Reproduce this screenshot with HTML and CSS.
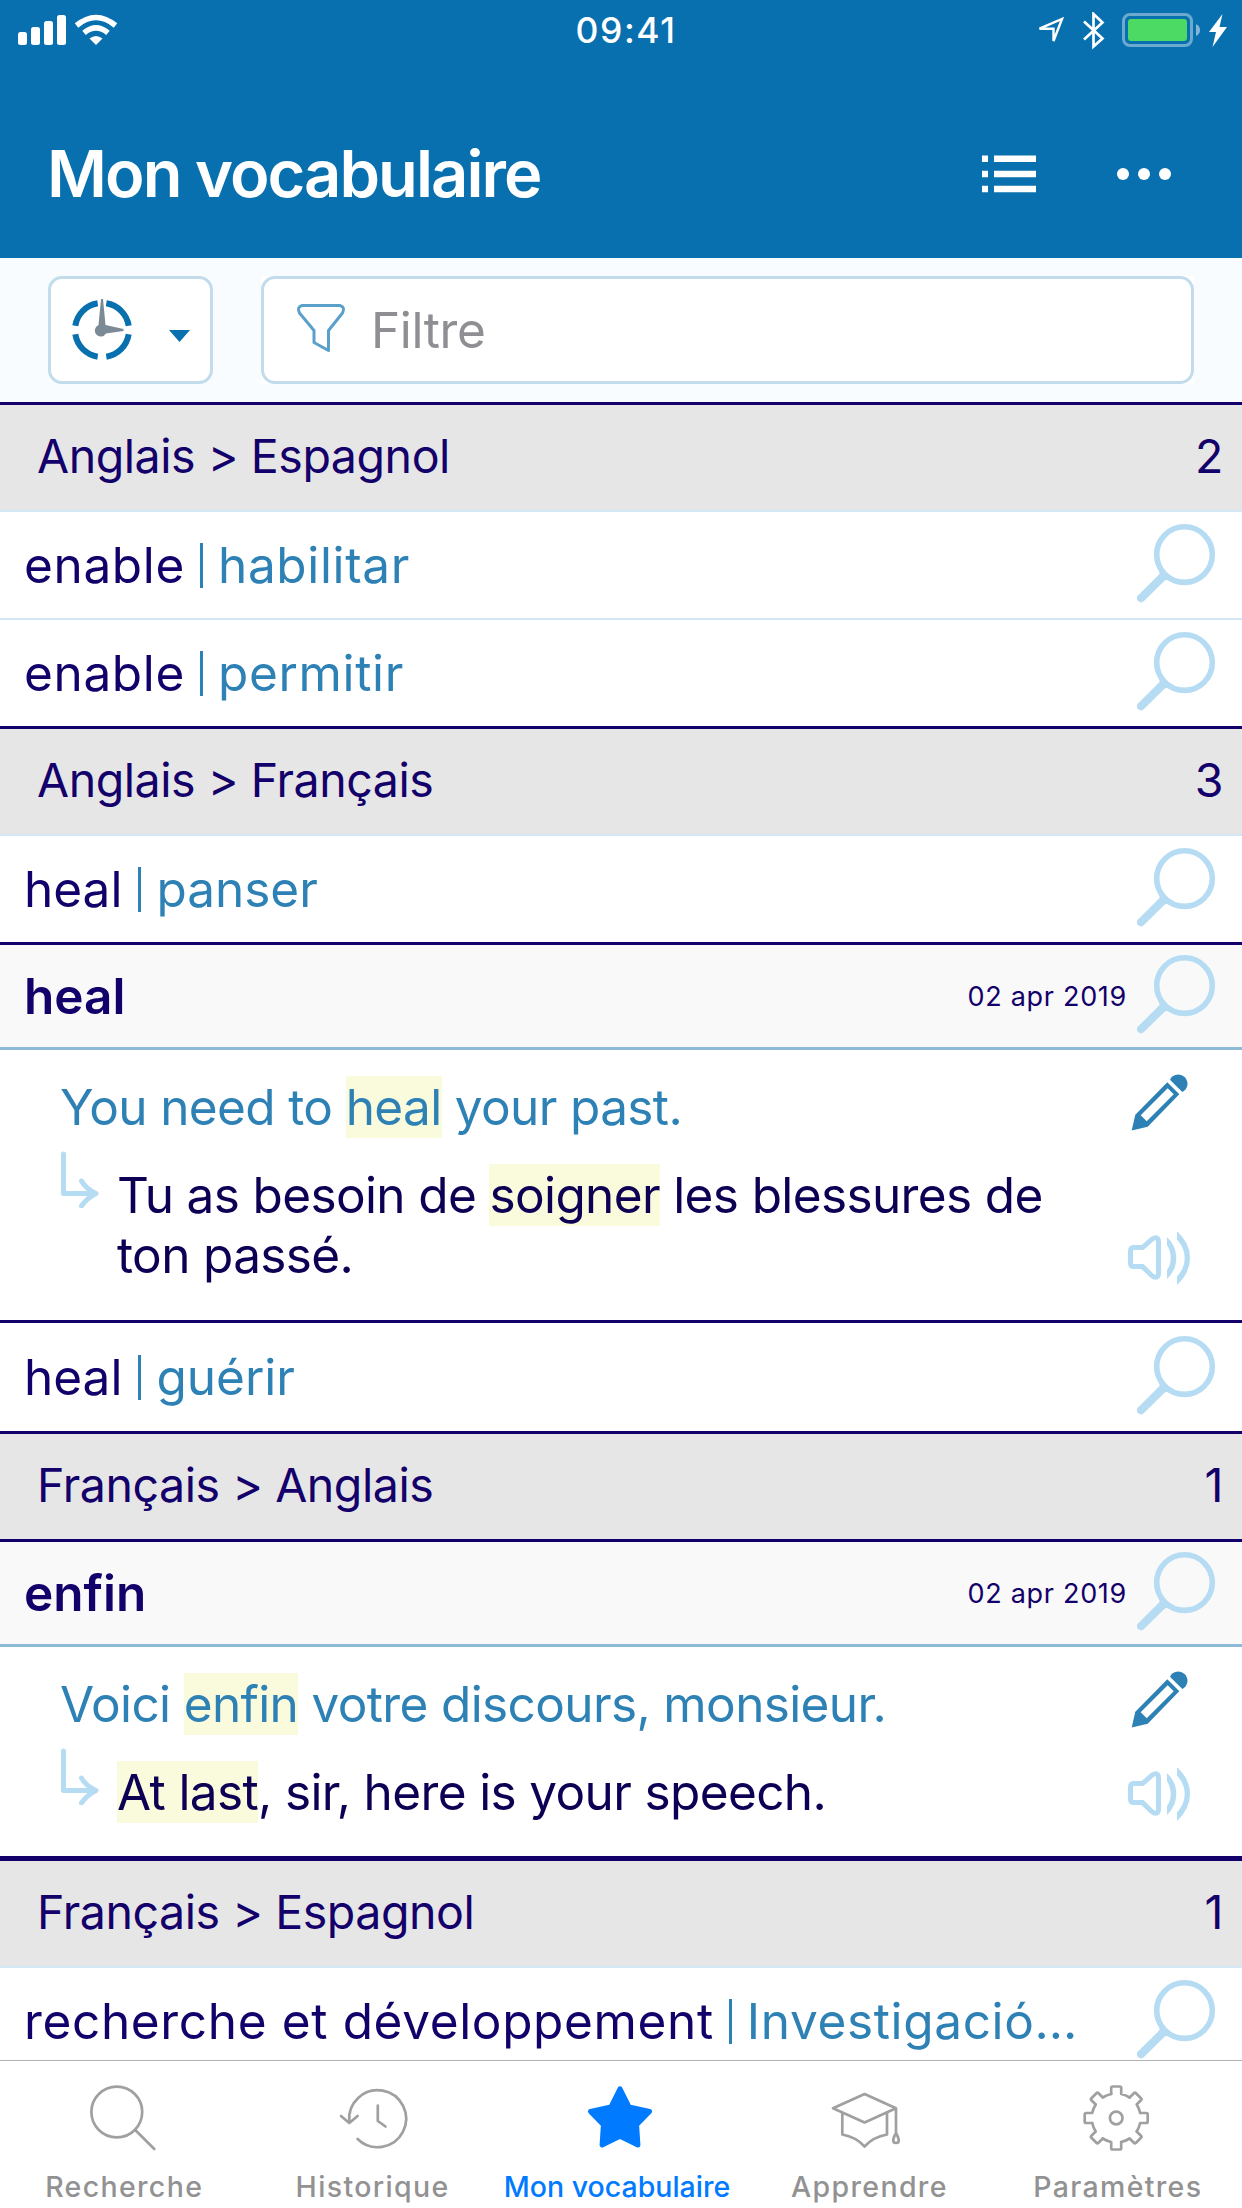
FILE: index.html
```html
<!DOCTYPE html>
<html lang="fr">
<head>
<meta charset="utf-8">
<meta name="viewport" content="width=device-width">
<title>Mon vocabulaire</title>
<link rel="stylesheet" href="styles.css">
</head>
<body>
<svg class="defs" aria-hidden="true">
  <symbol id="magnifier" viewBox="0 0 79 79">
    <circle cx="47.5" cy="30.6" r="27.8" fill="none" stroke="currentColor" stroke-width="5.6"/>
    <path d="M4.1 74.2 27 51.5" stroke="currentColor" stroke-width="8.2" stroke-linecap="round"/>
    <path d="M22 47Q24 51 20 53.500L25 58Q29 54.500 33 57.500L28 49Z" fill="currentColor"/>
  </symbol>
  <symbol id="pencil" viewBox="0 0 58 58">
    <path fill="currentColor" fill-rule="evenodd" d="M.7 56.500 4.300 40.700 36.300 8.300 48.300 20.300 16.700 52.700ZM9.700 41.300 15.700 47.300 42.700 20.300 36.700 14.300Z"/>
    <path fill="currentColor" d="M39 5.700A9.200 9.200 0 1 1 51.300 18Z"/>
  </symbol>
  <symbol id="speaker" viewBox="0 0 62 54">
    <path fill="none" stroke="currentColor" stroke-width="5" d="M6 16.600H14.500L24 8.200Q30.500 4.500 30.500 11V42Q30.500 48.500 24 44.800L14.500 35.600H6Q2.500 35.600 2.500 32V20Q2.500 16.600 6 16.600Z"/>
    <path fill="currentColor" d="M39 6Q48.300 15 48.300 27T39 48V39Q42.700 34 42.700 27T39 14ZM49 .3Q62 12 62 27T49 54V45.500Q56.700 37 56.700 27T49 8.500Z"/>
  </symbol>
  <symbol id="reply" viewBox="0 0 40 57">
    <path fill="none" stroke="currentColor" stroke-width="5" stroke-linecap="round" stroke-linejoin="round" d="M3.500 3V42.500H35M21.500 30Q26 38 36 42.500Q27 47 21.500 55"/>
  </symbol>
  <symbol id="tooth" viewBox="-35 -35 70 70">
    <path d="M-5-24V-30Q-5-31.500-3.500-31.500H3.500Q5-31.500 5-30V-24Q9.500-23 13.430-20.500" fill="none" stroke="currentColor" stroke-width="2.700" stroke-linejoin="round"/>
  </symbol>
</svg>

<div class="app">
  <header class="header">
    <div class="status">
      <svg class="status-left" width="102" height="34" viewBox="16 13 102 34">
        <g fill="#fff">
          <rect x="18" y="32" width="9" height="13" rx="2.500"/><rect x="31" y="27" width="9" height="18" rx="2.500"/>
          <rect x="44" y="21" width="9" height="24" rx="2.500"/><rect x="57" y="15" width="9" height="30" rx="2.500"/>
          <path d="M96 45 89.500 38.500Q96 33.500 102.500 38.500Z"/>
        </g>
        <g fill="none" stroke="#fff" stroke-width="5.500"><path d="M76.500 25.500Q96 9.500 115.500 25.500M84 32.800Q96 23 108 32.800"/></g>
      </svg>
      <span class="clock">09:41</span>
      <svg class="status-right" width="193" height="38" viewBox="1034 12 193 38">
        <path d="M1039.500 28.700 1062 19 1053.500 41V28.700Z" fill="none" stroke="#fff" stroke-width="2.400"/>
        <path d="M1084 21.500 1102.500 38.500 1093.500 46.500V14L1102.500 22.500 1084 39.500" fill="none" stroke="#fff" stroke-width="2.700"/>
        <rect x="1123.500" y="14.500" width="68" height="31" rx="6.500" fill="none" stroke="#6ca9cf" stroke-width="3"/>
        <rect x="1128" y="19" width="59" height="22" rx="3" fill="#4cd964"/>
        <path d="M1196 24Q1200 26 1200 30T1196 36Z" fill="#84b7d7"/>
        <path d="M1222.500 14 1209 32H1216L1212.500 47 1227 27H1219.500Z" fill="#fff"/>
      </svg>
    </div>
    <div class="titlebar">
      <h1 class="title">Mon vocabulaire</h1>
      <svg width="54" height="38" viewBox="0 0 54 38" fill="#fff"><path d="M0 .5h6v6.500H0zM12 .5h42v6.500H12zM0 15.700h6v6.500H0zM12 15.700h42v6.500H12zM0 30.800h6v6.500H0zM12 30.800h42v6.500H12z"/></svg>
      <svg width="54" height="12" viewBox="0 0 54 12" fill="#fff"><circle cx="6" cy="6" r="6"/><circle cx="27" cy="6" r="6"/><circle cx="48" cy="6" r="6"/></svg>
    </div>
  </header>

  <div class="toolbar">
    <button class="sort" type="button" aria-label="Tri">
      <svg width="62" height="62" viewBox="-31 -31 62 62">
        <path fill="none" stroke="#0870ae" stroke-width="6" d="M4.300-26.700A27 27 0 0 1 26.700-4.300M26.700 4.300A27 27 0 0 1 4.300 26.700M-4.300 26.700A27 27 0 0 1-26.700 4.300M-26.700-4.300A27 27 0 0 1-4.300-26.700"/>
        <path fill="#7b8a95" d="M-1-31H1L3.500-5 21.500-1V1L4 3.500A6 6 0 1 1-3.500-5Z"/>
      </svg>
      <svg width="21" height="12" viewBox="0 0 21 12"><path d="M0 0H21L10.500 12Z" fill="#0870ae"/></svg>
    </button>
    <div class="filter-wrap">
      <div class="filter">
        <svg width="48" height="48" viewBox="0 0 48 48"><path fill="none" stroke="#5aa0cb" stroke-width="3" stroke-linejoin="round" d="M5 1.500H43Q48.500 3 45.500 9L31.500 26.500V46.500L17 38.500V26.500L2.500 9Q-.5 3 5 1.500Z"/></svg>
        <span>Filtre</span>
      </div>
    </div>
  </div>

  <main class="list">
    <div class="group"><span>Anglais &gt; Espagnol</span><span class="count">2</span></div>
    <div class="row"><span class="word">enable</span><i class="bar"></i><span class="trans">habilitar</span><svg class="mag"><use href="#magnifier"/></svg></div>
    <div class="row"><span class="word">enable</span><i class="bar"></i><span class="trans">permitir</span><svg class="mag"><use href="#magnifier"/></svg></div>
    <div class="group"><span>Anglais &gt; Français</span><span class="count">3</span></div>
    <div class="row tight"><span class="word">heal</span><i class="bar"></i><span class="trans">panser</span><svg class="mag"><use href="#magnifier"/></svg></div>

    <section class="card">
      <div class="card-head"><h2>heal</h2><time>02 apr 2019</time><svg class="mag"><use href="#magnifier"/></svg></div>
      <div class="card-body">
        <div class="phrases">
          <p class="source">You need to <mark>heal</mark> your past.</p>
          <div class="target"><svg class="reply"><use href="#reply"/></svg><p>Tu as besoin de <mark>soigner</mark> les blessures de ton passé.</p></div>
        </div>
        <div class="actions"><svg class="pencil"><use href="#pencil"/></svg><svg class="speaker"><use href="#speaker"/></svg></div>
      </div>
    </section>

    <div class="row tight after-card"><span class="word">heal</span><i class="bar"></i><span class="trans">guérir</span><svg class="mag"><use href="#magnifier"/></svg></div>
    <div class="group before-card"><span>Français &gt; Anglais</span><span class="count">1</span></div>

    <section class="card last">
      <div class="card-head"><h2>enfin</h2><time>02 apr 2019</time><svg class="mag"><use href="#magnifier"/></svg></div>
      <div class="card-body">
        <div class="phrases">
          <p class="source">Voici <mark>enfin</mark> votre discours, monsieur.</p>
          <div class="target"><svg class="reply"><use href="#reply"/></svg><p><mark>At last</mark>, sir, here is your speech.</p></div>
        </div>
        <div class="actions"><svg class="pencil"><use href="#pencil"/></svg><svg class="speaker"><use href="#speaker"/></svg></div>
      </div>
    </section>

    <div class="group thick"><span>Français &gt; Espagnol</span><span class="count">1</span></div>
    <div class="row"><span class="word">recherche et développement</span><i class="bar"></i><span class="trans">Investigació…</span><svg class="mag"><use href="#magnifier"/></svg></div>
  </main>

  <nav class="tabs">
    <a class="tab">
      <svg viewBox="0 0 70 70"><circle cx="27.800" cy="29" r="25.400"/><path d="M46.200 47 65.300 66"/></svg>
      <span>Recherche</span>
    </a>
    <a class="tab">
      <svg viewBox="0 0 70 70"><path d="M11.300 39A28.500 28.500 0 1 1 19.600 56M3 33 11.300 40 19.600 33M39.800 22.500V38L47.500 43.500"/></svg>
      <span>Historique</span>
    </a>
    <a class="tab active">
      <svg viewBox="0 0 70 70"><path d="M34 5.800 43 23.900 63.500 28.400 50.600 41.800 51.900 62 34 53.300 16.100 62 17.400 41.800 4.500 28.400 25 23.900Z"/></svg>
      <span>Mon vocabulaire</span>
    </a>
    <a class="tab">
      <svg viewBox="0 0 70 70"><path d="M-1 25.300 30.600 11 62 25.300 30.600 39.500ZM8.300 30V51.500Q22 54 30.600 63.500 39 54 53 51.500V30M62 26V50Q56.500 60 62 60T62 50"/></svg>
      <span>Apprendre</span>
    </a>
    <a class="tab">
      <svg viewBox="0 0 70 70">
        <circle cx="33.200" cy="35" r="6.300"/>
        <g transform="translate(33.200 35)">
          <use href="#tooth" x="-35" y="-35" width="70" height="70"/>
          <use href="#tooth" x="-35" y="-35" width="70" height="70" transform="rotate(45)"/>
          <use href="#tooth" x="-35" y="-35" width="70" height="70" transform="rotate(90)"/>
          <use href="#tooth" x="-35" y="-35" width="70" height="70" transform="rotate(135)"/>
          <use href="#tooth" x="-35" y="-35" width="70" height="70" transform="rotate(180)"/>
          <use href="#tooth" x="-35" y="-35" width="70" height="70" transform="rotate(225)"/>
          <use href="#tooth" x="-35" y="-35" width="70" height="70" transform="rotate(270)"/>
          <use href="#tooth" x="-35" y="-35" width="70" height="70" transform="rotate(315)"/>
        </g>
      </svg>
      <span>Paramètres</span>
    </a>
  </nav>
</div>
</body>
</html>
```
FILE: styles.css
```css
* { box-sizing: border-box; }
body { margin: 0; background: #fff; font-family: Inter, "Liberation Sans", sans-serif; color: #13006a; }
h1, h2, p { margin: 0; }
svg { display: block; flex: none; }
.defs { width: 0; height: 0; position: absolute; }

.app { width: 1242px; height: 2208px; display: flex; flex-direction: column; overflow: hidden; }

/* Header */
.header { height: 258px; flex: none; background: #0870ae; color: #fff; }
.status { height: 62px; display: grid; grid-template-columns: 1fr auto 1fr; align-items: center; padding: 0 15px 0 16px; }
.status-left { margin-bottom: 2px; }
.status-right { justify-self: end; }
.clock { font-size: 35.5px; font-weight: 500; letter-spacing: 1.6px; line-height: 62px; padding-left: 9px; }
.titlebar { display: flex; align-items: center; padding: 72px 71px 0 47px; height: 152px; }
.title { flex: 1; font-size: 65px; line-height: 80px; font-weight: 600; letter-spacing: -1.94px; }
.titlebar svg { margin-left: 81px; margin-bottom: 1px; }
.titlebar svg:first-of-type { margin-left: 0; }

/* Toolbar */
.toolbar { height: 144px; flex: none; background: #f8fcff; display: flex; gap: 48px; padding: 18px 48px; }
.sort, .filter { border: 3px solid #c2dcec; border-radius: 14px; background: #fff; height: 108px; display: flex; align-items: center; }
.sort { width: 165px; padding: 0 20px 0 20px; justify-content: space-between; }
.sort svg:last-child { margin-top: 12px; }
.filter-wrap { flex: 1; background: #fff; }
.filter { padding: 0 33px; gap: 26px; color: #8e8e93; font-size: 49.5px; letter-spacing: -.4px; }
.filter svg { margin-bottom: 4px; overflow: visible; }

/* Vocabulary list */
.list { flex: 1; min-height: 0; overflow: hidden; }
.group { height: 110px; border-top: 3px solid #13006a; border-bottom: 2px solid #d3e8f4; background: #e6e6e6; display: flex; justify-content: space-between; align-items: center; padding: 0 19px 3px 37px; font-size: 46.5px; letter-spacing: -.44px; }
.group.thick { height: 112px; border-top-width: 5px; }
.group.before-card { height: 108px; border-bottom: 0; }
.row { height: 108px; display: flex; align-items: center; padding: 0 26px 0 24px; border-bottom: 2px solid #d3e8f4; font-size: 49.5px; letter-spacing: .65px; }
.row.tight { letter-spacing: 0; }
.row:has(+ .group), .row:has(+ .card) { height: 106px; border-bottom: 0; }
.row.after-card { height: 111px; border-top: 3px solid #13006a; }
.word, .trans { white-space: nowrap; }
.bar { width: 3px; height: 45px; background: #2d81b5; margin: 0 15px 0 15px; }
.trans { color: #2d81b5; }
.tight .bar { margin-left: 16px; }
.mag { width: 79px; height: 79px; margin-left: auto; margin-bottom: 4px; color: #b6dcf3; }

/* Expanded entry */
.card { border-top: 3px solid #13006a; }
.card-head { height: 105px; background: #f9f9f9; border-bottom: 3px solid #8fbad7; display: flex; align-items: center; padding: 0 26px 0 24px; }
.card-head h2 { font-size: 49.5px; font-weight: 600; }
.card-head time { margin-left: auto; font-size: 27px; letter-spacing: .7px; padding-top: 1px; }
.card-head .mag { margin-left: 10px; }
.card-body { height: 270px; display: flex; padding-right: 52px; }
.last .card-body { height: 209px; }
.phrases { width: 1100px; padding: 27px 0 0 60px; font-size: 49.5px; line-height: 60px; letter-spacing: -.63px; }
.source { color: #2d81b5; }
.target { display: flex; gap: 17px; margin-top: 28px; color: #0d0054; }
.reply { width: 40px; height: 57px; margin-top: -14px; color: #b6dcf3; }
mark { background: #fafadc; color: inherit; padding: 1px 0; }
.actions { margin-left: auto; display: flex; flex-direction: column; justify-content: space-between; align-items: flex-end; padding: 24px 0 35px; }
.pencil { width: 58px; height: 58px; color: #2d81b5; margin-right: 1px; }
.speaker { width: 62px; height: 54px; color: #b6dcf3; }

/* Tab bar */
.tabs { height: 148px; flex: none; border-top: 1px solid #b2b2b2; background: #fff; display: grid; grid-template-columns: repeat(5, 1fr); }
.tab { display: flex; flex-direction: column; align-items: center; padding-top: 22px; gap: 17px; color: #929292; font-size: 28.5px; line-height: 34px; font-weight: 500; letter-spacing: 1.35px; white-space: nowrap; }
.tab svg { width: 70px; height: 70px; overflow: visible; fill: none; stroke: #a0a0a0; stroke-width: 2.700; stroke-linecap: round; stroke-linejoin: round; color: #a0a0a0; }
.tab.active { color: #007aff; letter-spacing: 0; }
.tab.active svg { fill: #007aff; stroke: #007aff; stroke-width: 5; }
.tab.active span { padding-right: 8px; }
```
